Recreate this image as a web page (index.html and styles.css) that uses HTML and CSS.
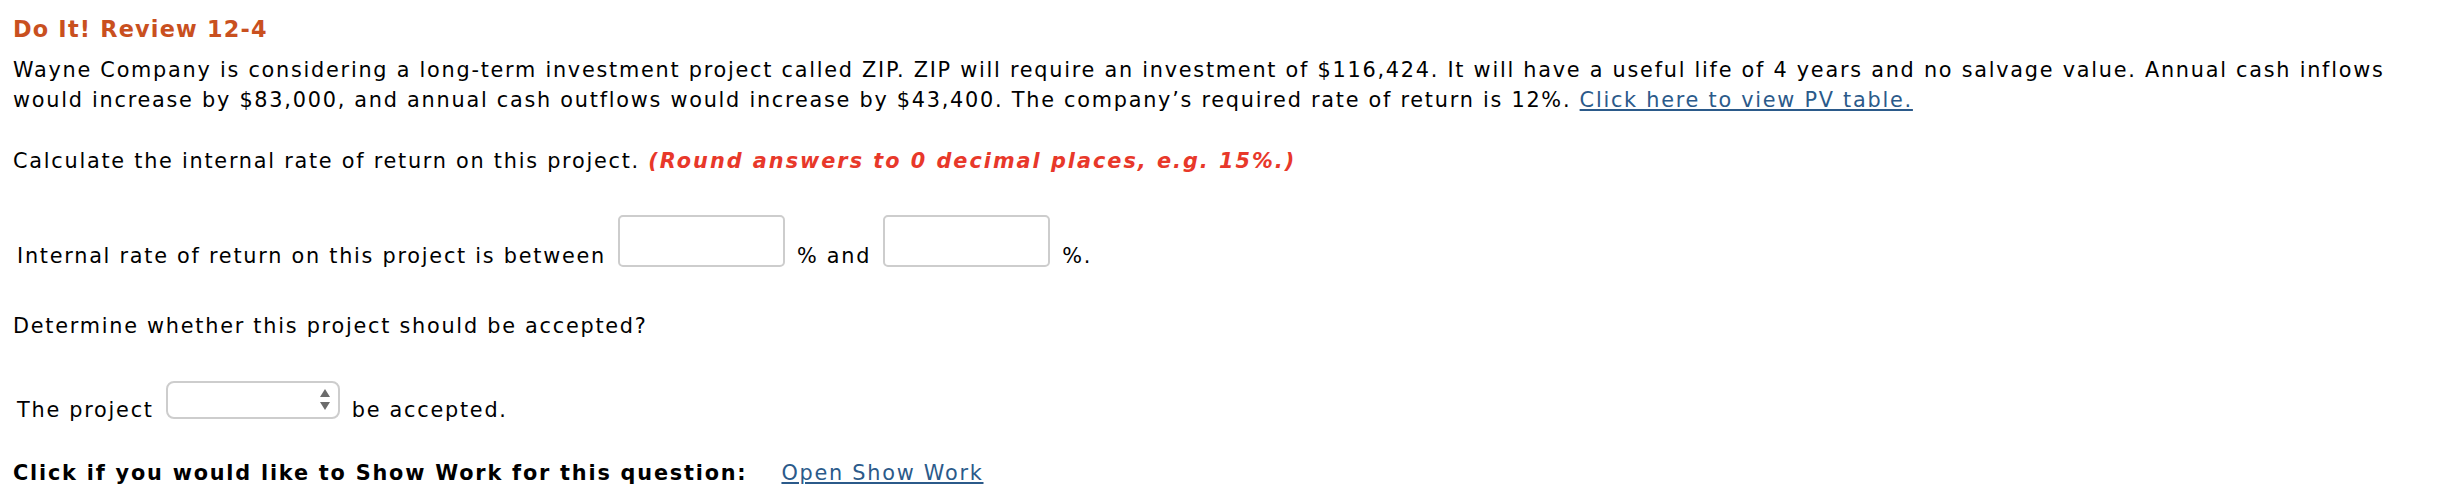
FILE: index.html
```html
<!DOCTYPE html>
<html lang="en">
<head>
  <meta charset="UTF-8">
  <title>Do It! Review 12-4</title>
  <link rel="stylesheet" href="styles.css">
</head>
<body>

  <div class="question">
    <h2 class="question-title">Do It! Review 12-4</h2>

    <p class="intro">Wayne Company is considering a long-term investment project called ZIP. ZIP will require an investment of $116,424. It will have a useful life of 4 years and no salvage value. Annual cash inflows would increase by $83,000, and annual cash outflows would increase by $43,400. The company’s required rate of return is 12%. <a href="#" class="link">Click here to view PV table.</a></p>

    <p class="task">Calculate the internal rate of return on this project. <em class="hint">(Round answers to 0 decimal places, e.g. 15%.)</em></p>

    <!-- IRR range -->
    <div class="answer-row irr-row">
      <span>Internal rate of return on this project is between</span>
      <input type="text" class="answer-input">
      <span>% and</span>
      <input type="text" class="answer-input">
      <span>%.</span>
    </div>

    <p class="task second-task">Determine whether this project should be accepted?</p>

    <!-- Accept / reject -->
    <div class="answer-row project-row">
      <span>The project</span>
      <span class="select-wrap">
        <select class="answer-select">
          <option></option>
          <option>should</option>
          <option>should not</option>
        </select>
        <svg class="select-arrows" width="12" height="22" viewBox="0 0 12 22">
          <path d="M6 0 L11 8 L1 8 Z" fill="#6b6b6b"/>
          <path d="M6 21 L11 13 L1 13 Z" fill="#6b6b6b"/>
        </svg>
      </span>
      <span>be accepted.</span>
    </div>

    <div class="show-work">
      <strong>Click if you would like to Show Work for this question:</strong>
      <a href="#" class="link">Open Show Work</a>
    </div>
  </div>

</body>
</html>
```

FILE: styles.css
```css
body {
  margin: 0;
  padding: 14px 13px 0;
  background: #fff;
  color: #000;
  font-family: Verdana, 'DejaVu Sans', sans-serif;
  font-size: 20.8px;
  line-height: 30px;
  letter-spacing: 1.75px;
}

.question-title {
  margin: 0;
  font-size: 22.4px;
  font-weight: bold;
  line-height: 30px;
  letter-spacing: 1.2px;
  color: #c9501f;
}

.intro {
  margin: 11px 0 0;
}

.task {
  margin: 31px 0 0;
}

.hint {
  color: #e8382a;
  font-weight: bold;
  font-style: italic;
  letter-spacing: 2px;
}

.link {
  color: #2b5a8a;
  text-decoration: underline;
}

/* answer rows */
.answer-row {
  display: flex;
  align-items: flex-end;
  gap: 12px;
  padding-left: 4px;
}

.irr-row {
  margin-top: 39px;
}

.second-task {
  margin-top: 40px;
}

.project-row {
  margin-top: 40px;
}

.answer-input {
  box-sizing: border-box;
  width: 167px;
  height: 52px;
  margin: 0 0 4px;
  padding: 0 8px;
  border: 2px solid #cdcdcd;
  border-radius: 5px;
  font: inherit;
  background: #fff;
}

.select-wrap {
  position: relative;
  display: block;
  margin-bottom: 6px;
}

.answer-select {
  display: block;
  box-sizing: border-box;
  width: 174px;
  height: 38px;
  margin: 0;
  padding: 0 28px 0 10px;
  border: 2px solid #cdcdcd;
  border-radius: 8px;
  background: #fff;
  font: inherit;
  appearance: none;
  -webkit-appearance: none;
}

.select-arrows {
  position: absolute;
  top: 8px;
  right: 9px;
  pointer-events: none;
}

.show-work {
  margin-top: 33px;
  display: flex;
  gap: 34px;
  letter-spacing: 1.8px;
}

.show-work .link {
  letter-spacing: 1.75px;
}
```
